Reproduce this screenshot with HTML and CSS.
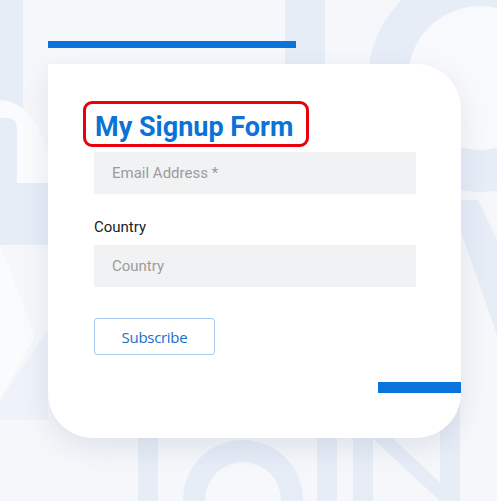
FILE: index.html
```html
<!DOCTYPE html>
<html lang="en">

<head>
    <meta charset="UTF-8">
    <meta name="viewport" content="width=device-width, initial-scale=1.0">
    <title>My Signup Form</title>
    <link rel="stylesheet" href="styles.css">
</head>

<body>
    <div class="page">
        <!-- faint lettering behind the card -->
        <svg class="backdrop" width="497" height="501" viewBox="0 0 497 501">
            <rect x="0" y="0" width="23" height="110" fill="#e6edf7"/>
            <path d="M0 118 H8 Q17 118 17 130 V183 H48 V245 H0 Z" fill="#e6edf7"/>
            <path d="M0 100 Q30 100 48 150 V183 H17 V130 Q17 118 8 118 H0 Z" fill="#fafbfd"/>
            <path d="M0 245 L35 335 L0 400 Z" fill="#fafbfd"/>
            <path d="M0 400 L48 330 V420 H0 Z" fill="#eef2f9"/>
            <rect x="285" y="0" width="40" height="80" fill="#e6edf7"/>
            <circle cx="480" cy="80" r="112" fill="#e6edf7"/>
            <circle cx="480" cy="78" r="72" fill="#f8f9fc"/>
            <path d="M450 200 L478 200 L497 240 L497 335 Z" fill="#e6edf7"/>
            <rect x="138" y="420" width="20" height="90" fill="#e6edf7"/>
            <circle cx="243" cy="500" r="60" fill="#e6edf7"/>
            <circle cx="243" cy="500" r="38" fill="#f6f8fb"/>
            <rect x="317" y="420" width="20" height="90" fill="#e6edf7"/>
            <rect x="353" y="420" width="20" height="90" fill="#e6edf7"/>
            <path d="M353 420 H373 L460 501 H440 Z" fill="#e6edf7"/>
            <rect x="440" y="400" width="20" height="110" fill="#e6edf7"/>
        </svg>

        <div class="topbar"></div>

        <div class="card">
            <h1 class="title">My Signup Form</h1>

            <form class="signup">
                <input type="email" class="field" placeholder="Email Address *">

                <label for="country" class="label">Country</label>
                <input type="text" id="country" class="field" placeholder="Country">

                <button type="button" class="subscribe">Subscribe</button>
            </form>

            <div class="cornerbar"></div>
        </div>
    </div>
</body>

</html>
```

FILE: styles.css
```css
body {
    margin: 0;
    padding: 0;
    font-family: Roboto, "Liberation Sans", sans-serif;
    background-color: #f5f7fb;
}

.page {
    position: relative;
    width: 497px;
    height: 501px;
    overflow: hidden;
    padding: 41px 0 0 48px;
    box-sizing: border-box;
}

.backdrop {
    position: absolute;
    left: 0;
    top: 0;
}

.topbar {
    position: relative;
    width: 248px;
    height: 7px;
    margin-bottom: 16px;
    background-color: #0a74dc;
}

.card {
    position: relative;
    width: 413px;
    height: 374px;
    box-sizing: border-box;
    padding: 37px 45px 0 46px;
    background: white;
    border-radius: 0 45px 45px 45px;
    box-shadow: 0 10px 28px rgba(30, 50, 90, 0.1);
}

.title {
    display: block;
    width: 226px;
    box-sizing: border-box;
    margin: 0 0 5px -11px;
    padding: 6px 0 0 9px;
    border: 3px solid #e8000b;
    border-radius: 9px;
    font-size: 27px;
    line-height: 34px;
    font-weight: 700;
    color: #0b72d6;
    white-space: nowrap;
}

.signup {
    display: flex;
    flex-direction: column;
    align-items: flex-start;
}

.field {
    width: 322px;
    height: 42px;
    box-sizing: border-box;
    padding: 0 18px;
    border: none;
    background-color: #f1f2f4;
    font-family: Roboto, "Liberation Sans", sans-serif;
    font-size: 15px;
    color: #333;
    outline: none;
}

.field::placeholder {
    color: #9b9b9b;
}

.label {
    margin: 23px 0 8px;
    font-size: 15px;
    line-height: 20px;
    color: #222;
}

.subscribe {
    margin-top: 31px;
    width: 121px;
    height: 37px;
    border: 1px solid #a9c9ef;
    border-radius: 3px;
    background: white;
    font-family: "Open Sans", sans-serif;
    font-size: 15px;
    letter-spacing: -0.3px;
    color: #176fca;
    cursor: pointer;
}

.cornerbar {
    width: 83px;
    height: 11px;
    margin: 27px -45px 0 auto;
    background-color: #0a74dc;
}
```
